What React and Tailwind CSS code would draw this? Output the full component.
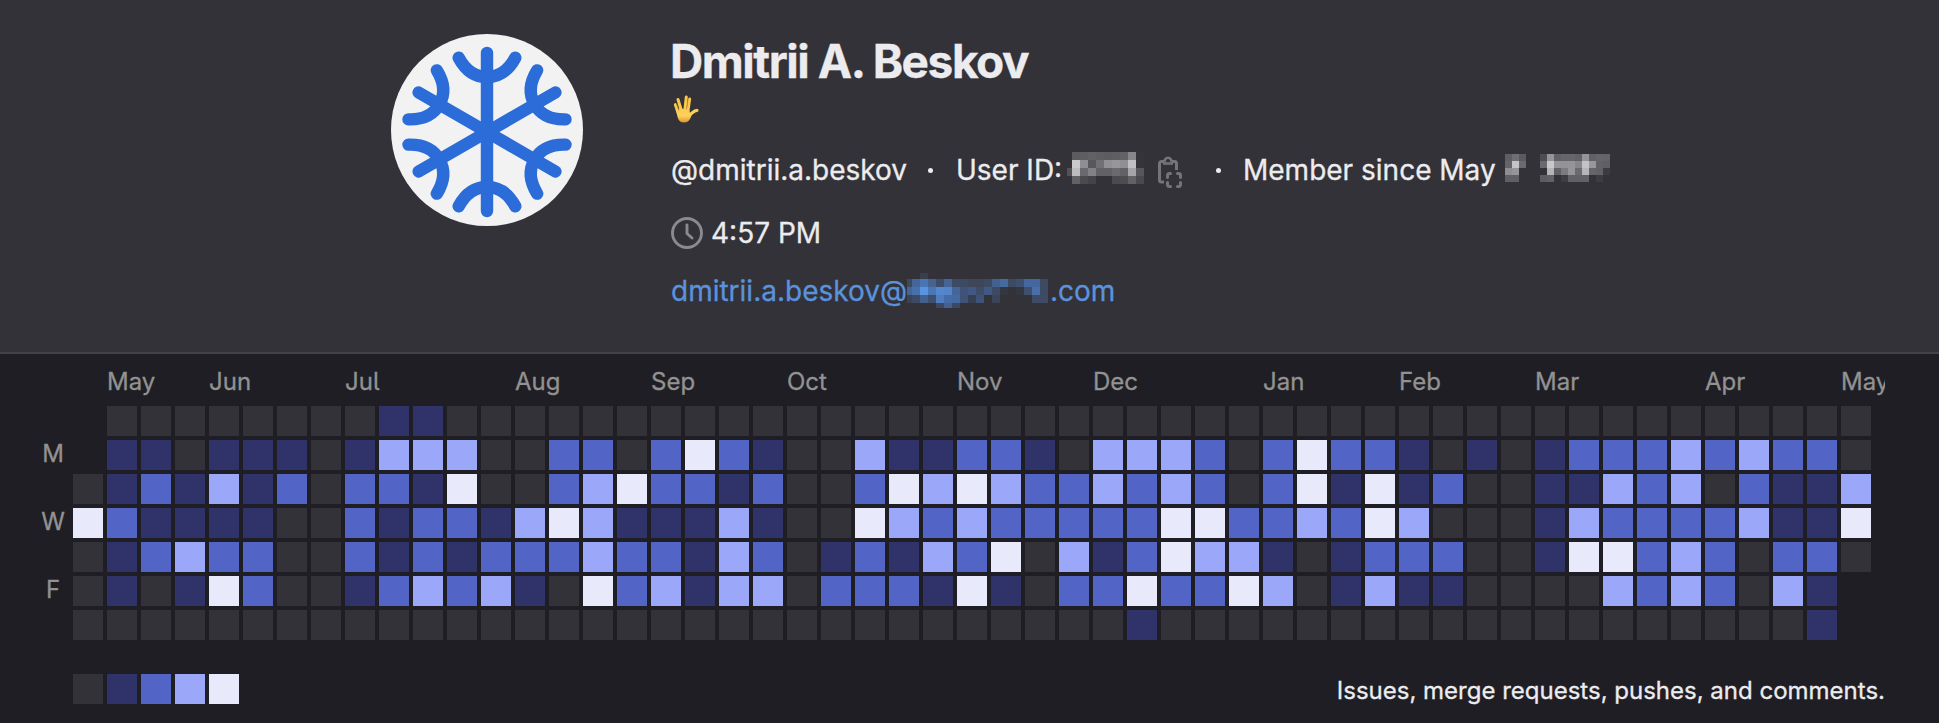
import React from "react";

const LEVELS = ["bg-[#333238]", "bg-[#303369]", "bg-[#5265c6]", "bg-[#9ba8f9]", "bg-[#e8eafc]"];

// One string per weekday, Sunday first; "." marks a day outside the range.
const DAYS = [
  ".0000000011" + "0".repeat(42),
  ".110111013330" + "0220242100311" + "22103332024221" + "0101222323220",
  "0121312022140" + "0234221200243" + "43223232024141" + "2001132302113",
  "4211110021221" + "3431113100432" + "32222244223243" + "0001322223114",
  "0123220021212" + "2232213201213" + "24031243310122" + "2001442320220",
  "0101420012323" + "1042313302221" + "41022422430131" + "100003232031.",
  "0".repeat(31) + "1" + "0".repeat(19) + "1.",
];

const MONTHS = [
  ["May", 3], ["Jun", 4], ["Jul", 5], ["Aug", 4], ["Sep", 4], ["Oct", 5], ["Nov", 4],
  ["Dec", 5], ["Jan", 4], ["Feb", 4], ["Mar", 5], ["Apr", 4], ["May", 1],
];

const ID_TILES = [
  ". 5c5b60 5e5d61 626165 5f5e62 5d5c60 5f5e62 636266 87868a 35343a",
  ". cac9cc 8f8e92 58575b 717074 919094 97969a 908f93 c0bfc2 35343a",
  "525156 bcbbbe 6a696d 828185 626165 626165 6b6a6e 626165 a5a4a8 57565a",
  ". 626165 4b4a4e 444347 . . 4b4a4e 4d4c50 626165 4a494d",
];
const DAY_TILES = ["5f5e62 6f6e72 5b5a5e", "656468 c5c4c7 6b6a6e", "8e8d91 969599 .", "605f63 605f63 ."];
const YEAR_TILES = [
  "4e4d52 969599 626165 666569 666569 626165 959498 626165 666569 646367",
  "6a696d c8c7ca 959498 939296 959498 87868a c3c2c5 98979b 626165 605f63",
  ". b5b4b7 626165 7c7b7f 969599 6b6a6e b6b5b8 666569 626165 3c3b40",
  "5d5c60 626165 . 3e3d42 626165 626165 626165 . 3d3c41 .",
];
const MAIL_TILES = [
  ". . 38404f . . . . . . . . . . . . . . .",
  "3d4961 446698 4a75b4 446292 3d4c69 446596 3d4a64 3d4a64 3d4759 3d4759 3d4a64 43618e 466aa0 3d4a64 3f4f6e 4467a0 4467a0 3d4a64",
  "446596 4870ab 5a94e0 4b76b5 5487cd 5285c9 466697 3f5277 415882 3d4c69 415882 3d4a64 34373f . 34373f 3e4f6e 4a6ea6 3d4a64",
  "3a4354 3d4a64 43608e 3e4f6e 4f7dbd 466ca5 4569a0 3f5277 374050 3f5277 . 3c4558 . . . . 3d4b66 3d4b66",
  ". . . . 3d4961 44618f 3d4961 . . . . . . . . . . .",
];

function Mosaic({ tiles, className }) {
  return (
    <div aria-hidden="true" className={`grid shrink-0 ${className}`}>
      {tiles.flatMap((row, r) =>
        row.split(" ").map((t, c) => (
          <i key={`${r}-${c}`} style={{ background: t === "." ? "transparent" : `#${t}` }} />
        ))
      )}
    </div>
  );
}

function Avatar() {
  return (
    <svg viewBox="0 0 192 192" className="h-[192px] w-[192px] shrink-0">
      <circle cx="96" cy="96" r="96" fill="#f2f2f2" />
      <g fill="none" stroke="#2b6cd8" strokeWidth="12.4" strokeLinecap="round">
        {[0, 60, 120, 180, 240, 300].map((a) => (
          <g key={a} transform={`rotate(${a} 96 98)`}>
            <path d="M96 98V19" />
            <path d="M67.7 23.7C73.5 34.5 83 43 96 43S118.5 34.5 124.3 23.7" />
          </g>
        ))}
      </g>
    </svg>
  );
}

function Vulcan() {
  return (
    <svg viewBox="0 0 26 28" className="h-7 w-[26px]">
      <defs>
        <linearGradient id="skin" x1="0" y1="0" x2="0" y2="28" gradientUnits="userSpaceOnUse">
          <stop offset="0" stopColor="#f6c445" />
          <stop offset="0.75" stopColor="#fdd05a" />
          <stop offset="1" stopColor="#d9902a" />
        </linearGradient>
      </defs>
      <g fill="none" stroke="url(#skin)" strokeLinecap="round">
        <path strokeWidth="2.7" d="M2.2 9.5L5 18" />
        <path strokeWidth="3" d="M5 4.5L8.5 16" />
        <path strokeWidth="3" d="M13.3 2L11.8 16" />
        <path strokeWidth="2.9" d="M16.7 4L14.8 17" />
        <path strokeWidth="3.2" d="M24 15.3C20.5 15.3 19 19 15.5 20.5" />
      </g>
      <path fill="url(#skin)" d="M3.4 16L7 13.5 16 14.5 17 18 19 18.5C18 22.5 16.5 27.5 11 27.5 5.5 27.5 4.5 23 3.4 16Z" />
      <path fill="none" stroke="#cf8f2a" strokeWidth="0.7" d="M3.7 9.5L6.2 16M14.9 5L13.6 14" />
    </svg>
  );
}

function CopyIcon() {
  return (
    <svg viewBox="0 0 24 32" className="h-8 w-6 shrink-0" fill="none" stroke="#75747a" strokeWidth="3">
      <path d="M6 26H3.5a2 2 0 0 1-2-2V7.500a2 2 0 0 1 2-2H6M14 5.500H16.500a2 2 0 0 1 2 2V14" />
      <path d="M5 7.500H15M6.700 6a3.400 3.400 0 1 1 6.600 0" strokeWidth="2.6" />
      <path strokeLinecap="round" d="M9.500 21.500V19.500a2 2 0 0 1 2-2H12.500M19.500 17.500H20.500a2 2 0 0 1 2 2V21.500M22.500 26.500V28.500a2 2 0 0 1-2 2H19.500M12.500 30.500H11.500a2 2 0 0 1-2-2V26.500" />
    </svg>
  );
}

function ClockIcon() {
  return (
    <svg viewBox="0 0 32 32" className="h-8 w-8 shrink-0" fill="none" stroke="#8b8a8f" strokeWidth="2.9">
      <circle cx="16" cy="16" r="14.5" />
      <path strokeLinecap="round" strokeLinejoin="round" d="M16 8V16.500L21 21" />
    </svg>
  );
}

export default function App() {
  return (
    <div className="flex h-[723px] w-[1939px] flex-col overflow-hidden bg-[#1f1e24] font-['Inter',sans-serif] text-[#ececef] [-webkit-text-stroke:0.3px] [font-feature-settings:'cv05']">
      <header className="flex h-[354px] shrink-0 border-b-2 border-[#434248] bg-[#333238] pt-[34px] pl-[391px]">
        <Avatar />
        <div className="ml-[88px] flex flex-col whitespace-nowrap text-[28px] leading-9">
          <h1 className="mt-px -ml-px h-[57px] text-[46px] leading-[52px] font-bold tracking-[-1.45px]">Dmitrii A. Beskov</h1>
          <div className="mt-[3px] ml-[2px] h-7"><Vulcan /></div>
          <div className="mt-[29px] flex h-9 items-start">
            <span className="w-[257px] shrink-0">@dmitrii.a.beskov</span>
            <span className="mt-[16px] h-[5px] w-[5px] shrink-0 rounded-full bg-[#ececef]" />
            <span className="ml-[23px] w-[111px] shrink-0">User ID:</span>
            <Mosaic tiles={ID_TILES} className="grid-cols-[5px_repeat(9,8px)] grid-rows-[repeat(4,8px)]" />
            <div className="mt-1 ml-[14px]"><CopyIcon /></div>
            <span className="mt-[16px] ml-[34px] h-[5px] w-[5px] shrink-0 rounded-full bg-[#ececef]" />
            <span className="ml-[22px] w-[262px] shrink-0">Member since May</span>
            <Mosaic tiles={DAY_TILES} className="mt-[2px] grid-cols-[repeat(3,7px)] grid-rows-[repeat(4,7px)]" />
            <Mosaic tiles={YEAR_TILES} className="mt-[2px] ml-[14px] grid-cols-[repeat(10,7px)] grid-rows-[repeat(4,7px)]" />
          </div>
          <div className="mt-[27px] flex h-9 items-center">
            <ClockIcon />
            <span className="ml-2">4:57 PM</span>
          </div>
          <a className="mt-[22px] flex h-9 items-start text-[#5a92de]">
            <span className="w-[236px] shrink-0">dmitrii.a.beskov@</span>
            <Mosaic tiles={MAIL_TILES} className="grid-cols-[5px_repeat(17,8px)] grid-rows-[6px_8px_8px_8px_5px]" />
            <span className="ml-[2px]">.com</span>
          </a>
        </div>
      </header>
      <main className="flex flex-col text-2xl">
        <div className="mt-[8px] mb-1 ml-[107px] flex h-10 w-[1778px] items-center overflow-hidden text-[#929292]">
          {MONTHS.map(([name, weeks], i) => (
            <span key={i} className="shrink-0" style={{ width: weeks * 34 }}>{name}</span>
          ))}
        </div>
        <div className="flex">
          <div className="grid w-[73px] grid-rows-[repeat(7,30px)] gap-y-1 pl-[33px] text-[#929292]">
            {["", "M", "", "W", "", "F", ""].map((d, i) => (
              <span key={i} className="w-10 text-center leading-[28px]">{d}</span>
            ))}
          </div>
          <div className="grid grid-cols-[repeat(53,30px)] grid-rows-[repeat(7,30px)] gap-1">
            {DAYS.flatMap((row, r) =>
              row.split("").map((v, c) => <i key={`${r}-${c}`} className={v === "." ? "" : LEVELS[Number(v)]} />)
            )}
          </div>
        </div>
        <div className="mt-[34px] ml-[73px] flex h-[30px] w-[1812px] items-start justify-between">
          <div className="flex gap-1">
            {LEVELS.map((c) => <i key={c} className={`h-[30px] w-[30px] ${c}`} />)}
          </div>
          <span className="leading-[34px]">Issues, merge requests, pushes, and comments.</span>
        </div>
      </main>
    </div>
  );
}
